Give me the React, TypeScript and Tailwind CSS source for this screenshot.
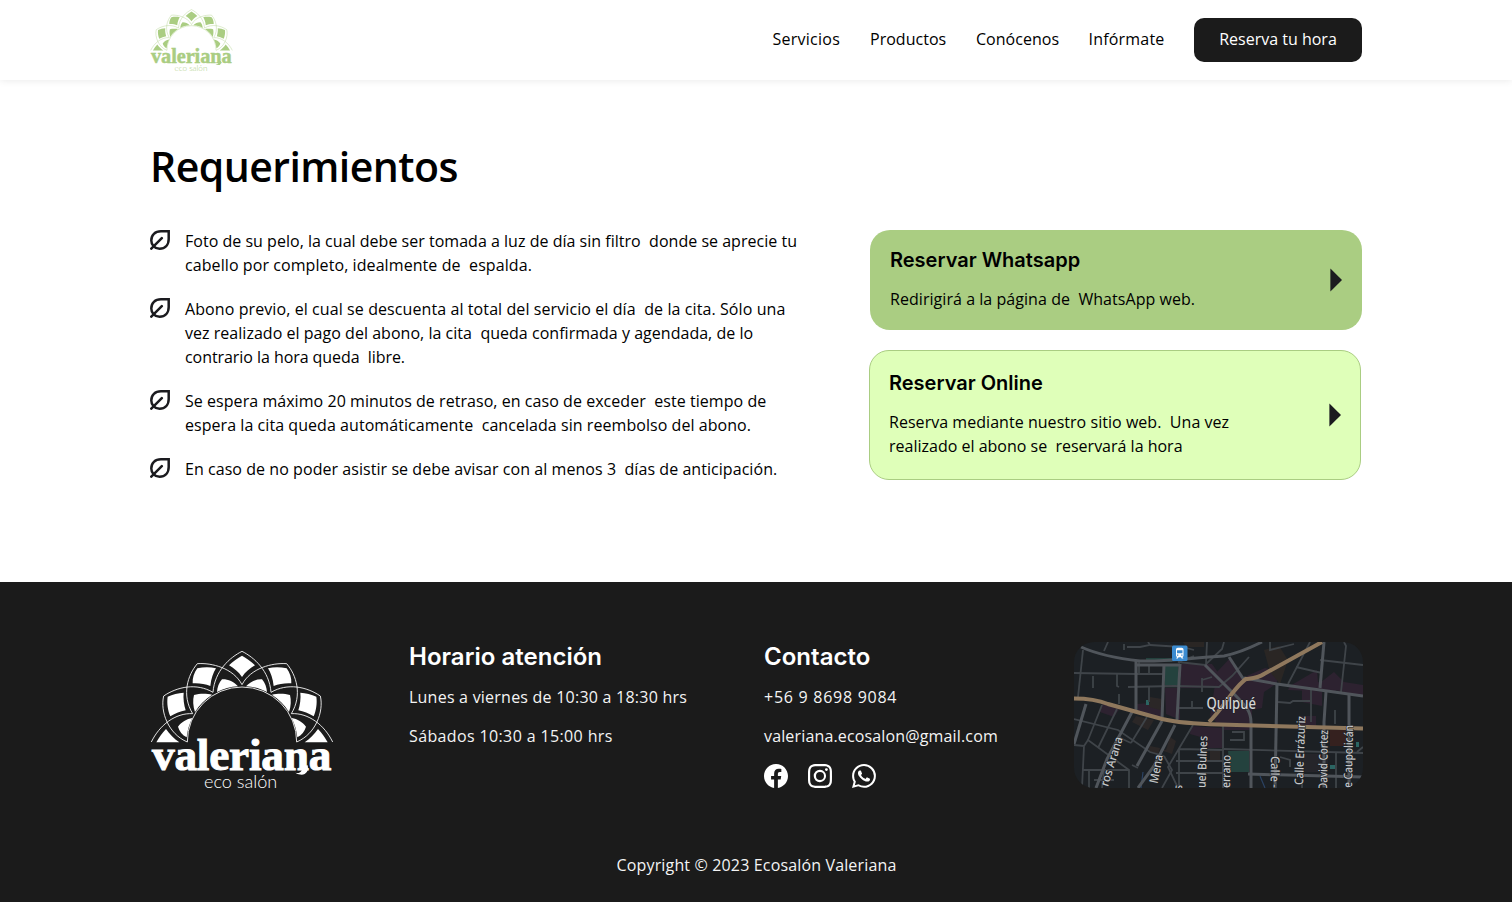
import type { ReactNode } from 'react';
import { BsFacebook, BsInstagram, BsWhatsapp } from 'react-icons/bs';

const petalLines = [
  'M306 34C270 52 224 92 219 157',
  'M172 71C215 68 280 84 306 134',
  'M172 71C143 105 124 165 158 221',
  'M71 168C112 140 170 128 219 157',
  'M71 168C60 215 85 282 142 306',
  'M34 306C58 256 106 218 158 221',
];

const petalFills = [
  'M172 85C192 81 210 81 228 85C220 98 213 116 211 138C195 131 176 129 158 130C157 114 162 98 172 85Z',
  'M83 170C98 163 114 159 131 158C129 174 132 196 137 211C121 214 106 220 91 229C84 212 80 190 83 170Z',
  'M49 307C57 292 67 278 78 267C89 282 102 296 118 307Z',
  'M231 156C232 142 237 128 246 118C263 117 281 125 294 139C272 140 250 146 231 156Z',
  'M165 216C159 199 158 180 162 165C180 160 201 161 216 164C195 178 178 195 165 216Z',
  'M140 292C127 285 118 274 114 260C124 246 140 237 157 234C148 252 142 271 140 292Z',
];

function HalfFlower() {
  return (
    <>
      {petalLines.map((d) => (
        <path key={d} d={d} fill="none" stroke="currentColor" strokeWidth="2.6" />
      ))}
      {petalFills.map((d) => (
        <path key={d} d={d} fill="currentColor" />
      ))}
      <path d="M142 306A164 164 0 0 1 306 141" fill="none" stroke="currentColor" strokeWidth="2.6" />
    </>
  );
}

function Logo({ className }: { className: string }) {
  return (
    <svg viewBox="30 30 552 420" className={className} role="img" aria-label="Valeriana eco salón">
      <HalfFlower />
      <g transform="matrix(-1 0 0 1 612 0)">
        <HalfFlower />
      </g>
      <path
        d="M306 47C319 54 333 64 345 76C331 84 316 96 306 111C296 96 281 84 267 76C279 64 293 54 306 47Z"
        fill="currentColor"
      />
      <text
        x="36"
        y="389"
        textLength="538"
        lengthAdjust="spacing"
        fill="currentColor"
        stroke="currentColor"
        strokeWidth="3"
        className="font-['Liberation_Serif',serif] text-[136px] font-bold"
      >
        valeriana
      </text>
      <path d="M503 376C508 400 490 412 466 398C480 402 488 394 486 378Z" fill="currentColor" />
      <text
        x="192"
        y="445"
        textLength="220"
        lengthAdjust="spacingAndGlyphs"
        fill="currentColor"
        className="font-['Lato',sans-serif] text-[54px] font-light"
      >
        eco salón
      </text>
    </svg>
  );
}

function LeafIcon() {
  return (
    <svg viewBox="0 0 20 20" className="mt-px size-5 shrink-0 text-[#1b1b1f]" fill="none" stroke="currentColor" strokeWidth="2.5">
      <path d="M18.7 1.3H11C5 1.3 1.3 5 1.3 10.4C1.3 15.2 4.8 18.7 9.6 18.7C15 18.7 18.7 15 18.7 9Z" />
      <path d="M1.3 18.7L11.8 8.2" strokeLinecap="round" />
    </svg>
  );
}

function Arrow() {
  return (
    <svg viewBox="0 0 12 24" className="h-6 w-3 shrink-0">
      <path d="M0.4 0.5L12 12L0.4 23.5Z" fill="#1b1b1f" />
    </svg>
  );
}

type Line = { text: string; track: string };

const requirements: Line[][] = [
  [
    { text: 'Foto de su pelo, la cual debe ser tomada a luz de día sin filtro  donde se aprecie tu', track: 'tracking-[0.02px]' },
    { text: 'cabello por completo, idealmente de  espalda.', track: 'tracking-[0.08px]' },
  ],
  [
    { text: 'Abono previo, el cual se descuenta al total del servicio el día  de la cita. Sólo una', track: 'tracking-[0.09px]' },
    { text: 'vez realizado el pago del abono, la cita  queda confirmada y agendada, de lo', track: 'tracking-[0.03px]' },
    { text: 'contrario la hora queda  libre.', track: 'tracking-[-0.06px]' },
  ],
  [
    { text: 'Se espera máximo 20 minutos de retraso, en caso de exceder  este tiempo de', track: 'tracking-[0.05px]' },
    { text: 'espera la cita queda automáticamente  cancelada sin reembolso del abono.', track: 'tracking-[0.055px]' },
  ],
  [{ text: 'En caso de no poder asistir se debe avisar con al menos 3  días de anticipación.', track: 'tracking-[0.055px]' }],
];

const nav: Line[] = [
  { text: 'Servicios', track: 'w-[68px] tracking-[0.25px]' },
  { text: 'Productos', track: 'w-[76.500px] tracking-[0.02px]' },
  { text: 'Conócenos', track: 'w-[83px] tracking-[0.02px]' },
  { text: 'Infórmate', track: 'w-[76px] tracking-[0.2px]' },
];

const blocks: { d: string; c: string }[] = [
  { d: 'M107 22H129L138 22L155 46H107Z', c: '#2d2230' },
  { d: 'M143 30L157 15L168 36L191 26L206 30L202 42L190 50L188 66L178 68V88H150L136 74Z', c: '#2d2230' },
  { d: 'M91 46H106V78L92 72Z', c: '#2d2230' },
  { d: 'M63 62L88 60V77L64 70Z', c: '#2d2230' },
  { d: 'M28 62L46 66L40 75L26 70Z', c: '#2d2230' },
  { d: 'M117 84L150 86V106H134L130 96L116 92Z', c: '#2d2230' },
  { d: 'M216 44L243 28L244 40L262 42V50L214 48Z', c: '#2d2230' },
  { d: 'M242 44L260 30L270 40L289 43V54Z', c: '#2d2230' },
  { d: 'M228 47L248 50V64L228 60Z', c: '#2d2230' },
  { d: 'M226 74H242V84H226Z', c: '#2d2230' },
  { d: 'M256 88H272V104H256Z', c: '#35211f' },
  { d: 'M109 0H130V5H112Z', c: '#2a2624' },
  { d: 'M190 8L205 4L214 18L206 42L196 30Z', c: '#2a2624' },
  { d: 'M76 55L88 57L86 68L75 65Z', c: '#2b2727' },
  { d: 'M62 74L80 78L74 88L58 80Z', c: '#2b2727' },
  { d: 'M96 95L102 99L98 112L84 107L92 108Z', c: '#2b2727' },
  { d: 'M76 104L86 106L84 112L74 109Z', c: '#2b2727' },
  { d: 'M136 108H146V118H136Z', c: '#2b2727' },
  { d: 'M222 112H254V130H228Z', c: '#25252a' },
  { d: 'M91 23L104 22V43L91 44Z', c: '#24423e' },
  { d: 'M72 16H98V20H72Z', c: '#24423e' },
  { d: 'M154 109H175V130H156Z', c: '#24423e' },
  { d: 'M72 58H75V63H72Z', c: '#2b6562' },
  { d: 'M256 123H261V127H256Z', c: '#2b6562' },
  { d: 'M282 100H285V105H282Z', c: '#2b6562' },
];

const wideRoads = [
  'M7 5C25 13 48 17 66 19C90 20 115 16 150 14C165 11 178 5 188 0',
  'M62 19V70',
  'M90 22L88 77',
  'M106 22L103 78',
  'M62 23H106',
  'M155 15L170 38',
  'M131 23L157 49C170 62 177 68 177 80V146',
  'M170 36L203 42L289 54',
  'M203 41L201 146',
  'M250 0L246 46',
  'M252 50L250 80V146',
  'M275 52V146',
  'M174 132L289 135',
  'M58 70L33 117L22 146',
  'M101 83L80 124L64 146',
  'M88 79L63 124',
  'M12 62L0 102',
];

const narrowRoads = [
  'M9 8L4 55',
  'M0 31L62 32H90',
  'M43 32V44L45 45',
  'M54 45L100 44L145 45L158 34L175 15',
  'M65 20V32M75 24V32M75 45V60M19 34V46M45 52V62',
  'M34 0L30 9M50 2V8M53 5H66L76 3L74 0',
  'M76 3L108 5L120 8M133 0L132 22M120 14L104 20L131 23L148 7L150 0',
  'M128 36V50M128 38L138 35',
  'M0 77L44 88L76 110L90 114',
  'M28 63L14 98M43 67L24 106M73 75L57 101M57 101L44 95',
  'M0 103L10 104L14 98L55 128V146M10 104L8 146M8 128H55',
  'M15 128V146M20 138H40M30 128L28 146',
  'M119 83L94 125L104 146M105 107V146M105 107L150 108M102 119H150M102 131H150',
  'M90 114L98 128L88 146M58 123L64 126',
  'M149 82V146M150 107L289 111',
  'M105 66H129M118 59V66M196 0V8L220 2',
  'M270 0L272 4L267 50M246 18L289 23M236 0L214 42M222 25L248 31M237 46V80',
  'M204 60L216 61L219 59H236M261 68V82',
  'M228 134V146M262 110V146M283 110L289 105M158 90H170V98H156M206 115L216 118V125',
];

const streets: { name: string; x: number; y: number; rotate: number; length: number }[] = [
  { name: 'ros Arana', x: 34, y: 145, rotate: -73, length: 51 },
  { name: 'Mena', x: 83.5, y: 142, rotate: -79, length: 29 },
  { name: 's', x: 108, y: 148, rotate: -88, length: 5 },
  { name: 'uel Bulnes', x: 131.5, y: 146, rotate: -88, length: 52 },
  { name: 'errano', x: 156, y: 146, rotate: -89, length: 33 },
  { name: 'Calle', x: 197, y: 114, rotate: 91, length: 26 },
  { name: '-', x: 197, y: 142, rotate: 91, length: 4 },
  { name: 'Calle Errázuriz', x: 229, y: 143, rotate: -88, length: 69 },
  { name: 'David Cortez', x: 253, y: 148, rotate: -89, length: 60 },
  { name: 'e Caupolicán', x: 278, y: 146, rotate: -89, length: 63 },
];

function CityMap() {
  return (
    <svg viewBox="0 0 289 146" className="h-[146px] w-[289px] shrink-0 rounded-[20px] bg-[#1c2024]">
      {blocks.map((b) => (
        <path key={b.d} d={b.d} fill={b.c} />
      ))}
      <g fill="none" stroke="#3f4449" strokeWidth="1.8">
        {narrowRoads.map((d) => (
          <path key={d} d={d} />
        ))}
      </g>
      <path d="M69 130L67 146M186 134L191 146" stroke="#2b4263" strokeWidth="1.2" fill="none" />
      <g fill="none" stroke="#50555b" strokeWidth="3">
        {wideRoads.map((d) => (
          <path key={d} d={d} />
        ))}
      </g>
      <g fill="none" stroke="#8f785d">
        <path d="M0 56.500C12 56.500 24 58 34 62L88 77C105 81 125 82 145 82.500L289 86.500" strokeWidth="4" />
        <path d="M135 80C148 68 160 45 172 37C180 36 184 36 190 32L248 0" strokeWidth="4" />
      </g>
      <g fill="#c4c6c8" stroke="#1c2024" strokeWidth="1.2" paintOrder="stroke" className="font-['Noto_Sans',sans-serif] text-[12px] font-medium">
        {streets.map((s) => (
          <text key={s.name} transform={`translate(${s.x} ${s.y}) rotate(${s.rotate})`} textLength={s.length} lengthAdjust="spacingAndGlyphs">
            {s.name}
          </text>
        ))}
      </g>
      <text
        x="132.500"
        y="66.500"
        textLength="49.500"
        lengthAdjust="spacingAndGlyphs"
        fill="#d3d4d5"
        stroke="#1c2024"
        strokeWidth="1.2"
        paintOrder="stroke"
        className="font-['Noto_Sans',sans-serif] text-[16px] font-medium"
      >
        Quilpué
      </text>
      <rect x="98" y="3.500" width="15.500" height="15.500" rx="1.500" fill="#3b8bd0" />
      <path
        d="M103.800 5.800H107.700Q109.500 5.800 109.500 7.300V13.500Q109.500 14.800 108.400 15L109.400 16.500H107.700L107 15.300H104.500L103.800 16.500H102.100L103.100 15Q102 14.800 102 13.500V7.300Q102 5.800 103.800 5.800Z"
        fill="#fff"
      />
      <path d="M103 8.300H108.500V11.300H103ZM103 12.600H104.300V13.800H103ZM107.200 12.600H108.500V13.800H107.200Z" fill="#3b8bd0" />
    </svg>
  );
}

function FooterTitle({ children }: { children: ReactNode }) {
  return <h3 className="pt-px font-['Inter',sans-serif] text-2xl leading-7 font-semibold tracking-[0.02px] text-white">{children}</h3>;
}

export default function App() {
  return (
    <div className="flex h-[902px] flex-col bg-white font-['Open_Sans',sans-serif] text-base leading-6 text-black">
      <header className="flex h-20 shrink-0 items-center justify-between px-[150px] shadow-[0_0_8px_rgba(0,0,0,0.1)]">
        <Logo className="h-[63px] w-[83px] text-[#aacd82]" />
        <nav className="flex items-center gap-[29.500px] whitespace-nowrap">
          {nav.map((n) => (
            <a key={n.text} className={`pb-0.5 ${n.track}`}>
              {n.text}
            </a>
          ))}
          <a className="flex h-11 w-[168px] items-center justify-center rounded-[10px] bg-[#1b1b1b] pb-0.5 text-white">Reserva tu hora</a>
        </nav>
      </header>

      <main className="h-[502px] shrink-0 px-[150px] pt-14">
        <h1 className="h-[61px] text-[41px] leading-[60px] font-semibold tracking-[-0.550px]">Requerimientos</h1>
        <div className="mt-8 flex justify-between">
          <ul className="flex flex-col gap-5 whitespace-pre">
            {requirements.map((item) => (
              <li key={item[0].text} className="flex gap-[15px]">
                <LeafIcon />
                <div>
                  {item.map((line) => (
                    <p key={line.text} className={line.track}>
                      {line.text}
                    </p>
                  ))}
                </div>
              </li>
            ))}
          </ul>
          <div className="mt-px flex flex-col gap-5 whitespace-pre">
            <a className="flex h-[100px] w-[492px] items-center justify-between rounded-[20px] bg-[#aacd82] px-5">
              <div className="-mt-px">
                <h2 className="mb-[15px] font-['Inter',sans-serif] text-xl leading-6 font-semibold">Reservar Whatsapp</h2>
                <p className="tracking-[0.05px]">Redirigirá a la página de  WhatsApp web.</p>
              </div>
              <Arrow />
            </a>
            <a className="-ml-px flex h-[130px] w-[492px] items-center justify-between rounded-[20px] border border-[#aacd82] bg-[#dfffb9] px-[19px]">
              <div className="-mt-0.5">
                <h2 className="mb-[15px] font-['Inter',sans-serif] text-xl leading-6 font-semibold">Reservar Online</h2>
                <p className="tracking-[0.04px]">Reserva mediante nuestro sitio web.  Una vez</p>
                <p>realizado el abono se  reservará la hora</p>
              </div>
              <Arrow />
            </a>
          </div>
        </div>
      </main>

      <footer className="flex h-[320px] shrink-0 flex-col bg-[#1b1b1b] pr-[149px] pl-[150px] text-[#f4f4f4]">
        <div className="flex h-[208px] pt-[60px] whitespace-nowrap">
          <div className="w-[259px] pt-2">
            <Logo className="h-[140px] w-[184px] text-white" />
          </div>
          <div className="w-[355px]">
            <FooterTitle>Horario atención</FooterTitle>
            <p className="mt-3.5 tracking-[0.23px]">Lunes a viernes de 10:30 a 18:30 hrs</p>
            <p className="mt-[15px] tracking-[0.37px]">Sábados 10:30 a 15:00 hrs</p>
          </div>
          <div className="w-[310px]">
            <FooterTitle>Contacto</FooterTitle>
            <p className="mt-3.5 tracking-[0.73px]">+56 9 8698 9084</p>
            <p className="mt-[15px] tracking-[0.15px]">valeriana.ecosalon@gmail.com</p>
            <div className="mt-4 flex gap-5 text-white">
              <BsFacebook size={24} />
              <BsInstagram size={24} />
              <BsWhatsapp size={24} />
            </div>
          </div>
          <CityMap />
        </div>
        <p className="mt-[63px] text-center tracking-[0.15px]">Copyright © 2023 Ecosalón Valeriana</p>
      </footer>
    </div>
  );
}
